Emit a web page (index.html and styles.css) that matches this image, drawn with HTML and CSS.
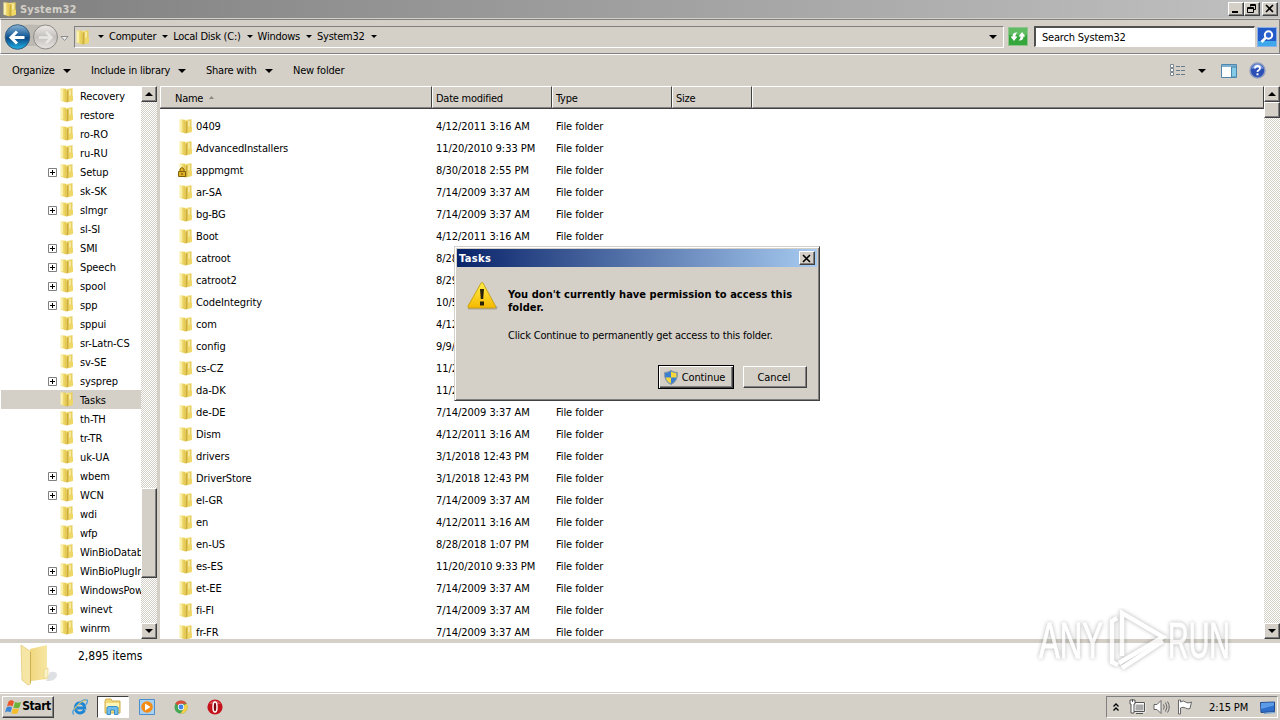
FILE: index.html
```html
<!DOCTYPE html>
<html lang="en">
<head>
  <meta charset="UTF-8">
  <title>System32</title>
  <link rel="stylesheet" href="styles.css">
</head>
<body>
  <!-- shared icons -->
  <svg class="defs" width="0" height="0">
    <defs>
      <linearGradient id="gFront" x1="0" x2="1"><stop offset="0" stop-color="#fbf0a0"/><stop offset="1" stop-color="#e3c444"/></linearGradient>
      <linearGradient id="gBack" x1="0" x2="1"><stop offset="0" stop-color="#f8e98c"/><stop offset="1" stop-color="#e6cc58"/></linearGradient>
      <linearGradient id="gBig" x1="0" x2="1"><stop offset="0" stop-color="#f0d67e"/><stop offset="1" stop-color="#f7e7a4"/></linearGradient>
      <linearGradient id="gBlue" x1="0" y1="0" x2="0" y2="1"><stop offset="0" stop-color="#8ab4d4"/><stop offset=".45" stop-color="#1d5f9c"/><stop offset=".55" stop-color="#0d4a86"/><stop offset="1" stop-color="#22b4e8"/></linearGradient>
      <linearGradient id="gGrey" x1="0" y1="0" x2="0" y2="1"><stop offset="0" stop-color="#eceae8"/><stop offset=".5" stop-color="#c4c0bc"/><stop offset="1" stop-color="#e6e4e2"/></linearGradient>
      <linearGradient id="gWarn" x1="0" y1="0" x2="0" y2="1"><stop offset="0" stop-color="#fff04a"/><stop offset="1" stop-color="#f5b800"/></linearGradient>
      <symbol id="folder" viewBox="0 0 16 16">
        <path d="M7 2 13.500 1.200v12.800l-6 1z" fill="url(#gBack)"/>
        <path d="M1.500 1.200 7 1.800 7.500 15.500 1.500 13.800z" fill="url(#gFront)"/>
        <path d="M7.500 3.500 9.500 3v12l-2 .5z" fill="#cfae38"/>
        <path d="M10 9.500l4-.7v5l-4 1.200z" fill="#efd768"/>
        <path d="M3 2.500v10.500M11 3v5.500" stroke="#fffbd0"/>
      </symbol>
      <symbol id="down" viewBox="0 0 8 4"><path d="M0 0h8L4 4z"/></symbol>
    </defs>
  </svg>

  <div class="titlebar">
    <svg class="icon16"><use href="#folder"/></svg>
    <span class="title">System32</span>
    <button class="winbtn"><svg width="10" height="9"><path d="M1 7h6v2H1z"/></svg></button>
    <button class="winbtn"><svg width="10" height="9" fill="none" stroke="#000"><path d="M3.500 2.500v-2h5v5h-2M3 1.500h6M.5 3.500h6v5h-6zM0 4.500h7"/></svg></button>
    <button class="winbtn gap"><svg width="10" height="9" fill="none" stroke="#000" stroke-width="1.600"><path d="M1 1l7 7M8 1L1 8"/></svg></button>
  </div>

  <div class="navbar">
    <svg class="nav-buttons" width="72" height="30">
      <path d="M10 5Q30 0 52 5V24H10z" fill="#b4b0aa" opacity=".7"/>
      <circle cx="17.500" cy="15" r="12.300" fill="url(#gBlue)" stroke="#3c5f7e"/>
      <path d="M24.500 15.500H11.500M17 9.500l-6 6 6 6" fill="none" stroke="#fff" stroke-width="3"/>
      <circle cx="45.500" cy="15" r="12" fill="url(#gGrey)" stroke="#8d8985"/>
      <path d="M39 15.500h12.500M46 10l5.500 5.500L46 21" fill="none" stroke="#e9e7e4" stroke-width="2.500"/>
      <path d="M61 14.500h7l-3.500 4z" fill="#eee" stroke="#8b8b8b"/>
    </svg>
    <div class="address">
      <svg class="icon16"><use href="#folder"/></svg>
      <svg class="crumb-arrow first"><use href="#down"/></svg><span>Computer</span>
      <svg class="crumb-arrow"><use href="#down"/></svg><span>Local Disk (C:)</span>
      <svg class="crumb-arrow"><use href="#down"/></svg><span>Windows</span>
      <svg class="crumb-arrow"><use href="#down"/></svg><span>System32</span>
      <svg class="crumb-arrow"><use href="#down"/></svg>
      <svg class="arrow history"><use href="#down"/></svg>
    </div>
    <svg class="refresh" width="20" height="19"><rect x=".5" y=".5" width="19" height="18" fill="#35a63c" stroke="#8fc48f"/><path d="M1 1h18v7H1z" fill="#7dcb7d" opacity=".6"/><path d="M2.500 9.500 6 14l3.500-4.500H7.500q-.2-2.500 2-4-5-.5-5 4zM17.500 9.500 14 5l-3.500 4.500h2q.2 2.500-2 4 5 .5 5-4z" fill="#fff"/></svg>
    <div class="search">Search System32</div>
    <svg class="go" width="20" height="20"><rect x=".5" y=".5" width="19" height="19" fill="#2459c8" stroke="#8aaee6"/><path d="M1 14h18v5H1z" fill="#3fa8ea"/><circle cx="11.500" cy="8" r="3.700" fill="#2f63cf" stroke="#fff" stroke-width="2"/><path d="M8.500 11l-4 4" stroke="#fff" stroke-width="2.500"/></svg>
  </div>

  <div class="toolbar">
    <span class="t1">Organize</span><svg class="arrow"><use href="#down"/></svg>
    <span class="t2">Include in library</span><svg class="arrow"><use href="#down"/></svg>
    <span class="t3">Share with</span><svg class="arrow"><use href="#down"/></svg>
    <span class="t4">New folder</span>
    <svg class="view" width="16" height="13"><g fill="#fff" stroke="#7b8790"><path d="M.5.5h3v3h-3zM.5 4.500h3v3h-3zM.5 8.500h3v3h-3z"/><path d="M6 2.500h4m1 0h4M6 6.500h4m1 0h4M6 10.500h4m1 0h4" stroke="#667b8c"/></g></svg>
    <svg class="arrow view-arrow"><use href="#down"/></svg>
    <svg class="preview" width="17" height="14"><path d="M.5.5h15v13H.5z" fill="#fff" stroke="#4e86ad"/><path d="M1 1h14v2H1z" fill="#7fb0d0"/><path d="M10.500 3v10h5V3z" fill="#83c9e8" stroke="#4e86ad"/></svg>
    <svg class="help" width="17" height="17"><circle cx="8.500" cy="8.500" r="7.500" fill="#2b4fb5" stroke="#8e9cc0" stroke-width="1.500"/><path d="M2.500 7q2-5 6-5t6 5q-6-2-12 0" fill="#7d9de0"/><path d="M6 6.500Q6 4 8.500 4T11 6.200q0 1.300-1.500 2.100-1 .5-1 1.700" fill="none" stroke="#fff" stroke-width="1.800"/><path d="M7.500 11.300h2v2h-2z" fill="#fff"/></svg>
  </div>

  <div class="main">
    <div class="tree" id="tree"></div>
    <div class="scrollbar left">
      <button><svg class="arrow up"><use href="#down"/></svg></button>
      <div class="thumb"></div>
      <button class="last"><svg class="arrow"><use href="#down"/></svg></button>
    </div>
    <div class="splitter"></div>
    <div class="list">
      <div class="header">
        <div class="col name">Name <svg width="5" height="3"><path d="M0 3h5L2.500 0z" fill="#8c8880"/></svg></div>
        <div class="col">Date modified</div>
        <div class="col">Type</div>
        <div class="col size">Size</div>
        <div class="col rest"></div>
      </div>
      <div class="rows" id="rows"></div>
    </div>
    <div class="scrollbar right">
      <button><svg class="arrow up"><use href="#down"/></svg></button>
      <div class="thumb"></div>
      <button class="last"><svg class="arrow"><use href="#down"/></svg></button>
    </div>
  </div>

  <div class="details">
    <svg width="40" height="44" viewBox="0 0 40 44">
      <path d="M26 37l4-9q7-1 7 3t-7 6z" fill="#c8ccd0" opacity=".6"/>
      <path d="M10 5 27 1V35l-16 2z" fill="url(#gBig)"/>
      <path d="M24 26l4-2v9l-4 2z" fill="#fbf3c8" stroke="#e4cb76" stroke-width=".6"/>
      <path d="M1 1l9.500 6.500V40L8 41 2 36z" fill="#f6e6a6" stroke="#dfc670" stroke-width=".7"/>
      <path d="M10.500 8v31" stroke="#cfae52"/>
    </svg>
    <span>2,895 items</span>
  </div>

  <div class="taskbar">
    <button class="start">
      <svg width="17" height="16"><path d="M3.500 2.500q3-2.500 5.500 0L7.500 7.500q-2.500-2-5.500 0z" fill="#e8582a"/><path d="M10 3q3 1.500 6 0L14.500 8.500q-3 1.500-6 0z" fill="#6db33a"/><path d="M1.500 8.500q3-2 5.500 0L5.500 13.500q-2.500-2-5.500 0z" fill="#3c86d8"/><path d="M8 9.200q3 1.500 6 0l-1.500 5q-3 1.500-6 0z" fill="#f5bd28"/></svg>
      Start
    </button>
    <svg class="app ie" width="18" height="18"><path d="M13.500 12Q12 15 8.800 15 4.300 14.500 4.300 9.700 4.800 5 9 5t4.800 5H6" fill="none" stroke="#1f86d4" stroke-width="2.800"/><path d="M3 16.500Q-.5 14.500 6 7.500T16 2Q17.500 3.500 14.500 7" fill="none" stroke="#4a9fdc" stroke-width="1.300"/><path d="M3 12q2-4 6-7t6-3.200" fill="none" stroke="#e7c34d"/></svg>
    <div class="running">
      <svg width="18" height="17"><path d="M1 3l1-2h5l1 2h8v12H1z" fill="#f2d978" stroke="#d2ae4a"/><path d="M2 5h13v4H2z" fill="#fff5b8"/><path d="M3 16.500V10q0-1.500 2-1.500h7q2 0 2 1.500v6.500h-3.500V12h-4v4.500z" fill="#70bdec" stroke="#3a8fca"/></svg>
    </div>
    <svg class="app wmp" width="16" height="16"><path d="M.5.5h15v15H.5z" fill="#a9d2f2" stroke="#4c8ecb"/><circle cx="8" cy="8" r="5.800" fill="#f38b17"/><path d="M6 4.500 11.500 8 6 11.500z" fill="#fff"/></svg>
    <svg class="app chrome" width="14" height="14" viewBox="0 0 16 16"><circle cx="8" cy="8" r="7.500" fill="#45a653"/><path d="M8 8 1.500 4.300A7.500 7.500 0 0 1 14.500 4.300H8z" fill="#dd4b3c"/><path d="M8 8 14.500 4.300A7.500 7.500 0 0 1 7.500 15.500L11.200 9.900z" fill="#f8cf46"/><circle cx="8" cy="8" r="3.600" fill="#fff"/><circle cx="8" cy="8" r="2.800" fill="#4383e8"/></svg>
    <svg class="app opera" width="16" height="16"><circle cx="8" cy="8" r="7.600" fill="#c5131c"/><path d="M2 5Q8-2 14 5z" fill="#e8777a" opacity=".6"/><ellipse cx="8" cy="8" rx="2" ry="5" fill="#7a0a10" stroke="#fff" stroke-width="1.500"/></svg>
    <div class="tray">
      <svg width="6" height="9" fill="none" stroke="#000" stroke-width="1.300"><path d="M.5 3.500 3 1l2.500 2.500M.5 7.500 3 5l2.500 2.500"/></svg>
      <svg class="net" width="17" height="16"><path d="M5.500 4.500h10v8h-10z" fill="#aaa" stroke="#fff" stroke-width="2"/><path d="M4.500 3.500h11v9h-11zM7 14.500h7" fill="none" stroke="#555"/><path d="M1 1h5v4H5v9H2V5H1z" fill="#fff" stroke="#555"/><path d="M3.500 0v3" stroke="#555"/></svg>
      <svg class="vol" width="17" height="16" fill="none" stroke="#666"><path d="M1 5.500h3l4-4v13l-4-4H1z" fill="#fff"/><path d="M10.500 5.500q1.500 2.500 0 5M12.500 3.500q3 4.500 0 9M14.500 2.500q3.500 5.500 0 11"/></svg>
      <svg class="flag" width="17" height="16"><path d="M3.500 3q3-2 5 0t6 0L13 9.500q-2 1-4.500-.5t-5 0V15h-2V1h2z" fill="#fff" stroke="#666"/></svg>
      <span>2:15 PM</span>
      <svg class="desktop" width="16" height="13"><path d="M.5 1.500 14.500 1V10.500L1 11.500z" fill="#2d6fca" stroke="#234b8c"/><path d="M1 2 14 1.500v3L1 8z" fill="#5c9be6"/><path d="M4 12.500 15 11.500" stroke="#6aa6da"/></svg>
    </div>
  </div>

  <div class="dialog">
    <div class="dialog-title">Tasks <button class="winbtn"><svg width="10" height="9" fill="none" stroke="#000" stroke-width="1.600"><path d="M1 1l7 7M8 1L1 8"/></svg></button></div>
    <div class="dialog-body">
      <svg width="32" height="30"><path d="M2 27.500h28l1-2" fill="none" stroke="#aaa69e" stroke-width="2"/><path d="M16 1.500Q17 1.500 17.500 3L29.500 25q.5 2-1 2H3q-1.500 0-1-2L14.500 3q.5-1.500 1.500-1.500z" fill="url(#gWarn)" stroke="#c9a21c"/><path d="M14 8h4l-.8 10h-2.400zM14 20.500h4v4h-4z" fill="#2a2208"/></svg>
      <div class="message">
        <h1>You don't currently have permission to access this<br>folder.</h1>
        <p>Click Continue to permanently get access to this folder.</p>
      </div>
    </div>
    <div class="dialog-buttons">
      <button class="continue"><svg width="14" height="15"><path d="M7 .5q3 2 6.500 2 .5 9-6.500 12Q0 11.500.5 2.500q3.500 0 6.500-2z" fill="#3b7fd0" stroke="#8f98a4"/><path d="M7 1.500q3 1.500 5.500 1.800V7.500H7zM7 7.500v6Q2.500 11.500 1.800 7.500z" fill="#f7d93c"/></svg><span>Continue</span></button>
      <button class="cancel"><span>Cancel</span></button>
    </div>
  </div>

  <svg class="watermark" width="204" height="70">
    <g class="mark">
      <text x="5" y="50" textLength="64" lengthAdjust="spacingAndGlyphs">ANY</text>
      <text x="134" y="50" textLength="62" lengthAdjust="spacingAndGlyphs">RUN</text>
      <path d="M83 10 78 13V54L84 57"/>
      <path d="M88 48V5L129 29 85 55"/>
      <path d="M129 33 88 60"/>
    </g>
  </svg>

  <script src="script.js"></script>
</body>
</html>
```
FILE: styles.css
```css
* {
  box-sizing: border-box;
}

body {
  margin: 0;
  width: 1280px;
  height: 720px;
  overflow: hidden;
  position: relative;
  display: flex;
  flex-direction: column;
  background: #d4d0c8;
  color: #000;
  font: 11px/13px "DejaVu Sans Condensed", "DejaVu Sans", sans-serif;
  font-stretch: condensed;
  letter-spacing: -0.1px;
  white-space: nowrap;
}

svg {
  display: block;
  flex: none;
}

button {
  font: inherit;
  letter-spacing: inherit;
  color: inherit;
  padding: 0;
  flex: none;
  display: flex;
  align-items: center;
  justify-content: center;
  background: #d4d0c8;
  border: 1px solid;
  border-color: #fff #404040 #404040 #fff;
  box-shadow: inset -1px -1px #808080;
}

.defs { position: absolute; }
.icon16 { width: 16px; height: 16px; }
.arrow { width: 8px; height: 4px; }
.arrow.up { transform: rotate(180deg); }

/* Title bar */
.titlebar {
  height: 19px;
  display: flex;
  align-items: center;
  padding: 0 2px 1px;
  background: linear-gradient(90deg, #808080, #c0c0c0);
  border-bottom: 1px solid #d4d0c8;
}

.title {
  flex: 1;
  margin: 1px 0 0 2px;
  color: #d4d0c8;
  font-weight: bold;
  letter-spacing: 0.2px;
}

.winbtn {
  width: 16px;
  height: 14px;
}

.winbtn.gap { margin-left: 2px; }

/* Address row */
.navbar {
  height: 35px;
  display: flex;
  align-items: center;
  border: 1px solid #fff;
  border-color: #808080 #808080 #808080 #fff;
  box-shadow: 0 1px #fff;
}

.nav-buttons { margin: 1px 0 0 -1px; }

.address {
  width: 930px;
  height: 22px;
  margin-left: 2px;
  display: flex;
  align-items: center;
  border: 1px solid;
  border-color: #808080 #fff #fff #808080;
  letter-spacing: -0.25px;
}

.crumb-arrow {
  width: 6px;
  height: 3px;
  margin: 0 5px 0 6px;
}

.crumb-arrow.first { margin-left: 7px; }
.history { margin-left: auto; margin-right: 6px; }
.refresh { margin-left: 4px; }

.search {
  width: 221px;
  height: 21px;
  margin-left: 6px;
  padding: 3px 6px;
  background: #fff;
  border: 2px solid;
  border-color: #505050 #fff #fff #505050;
  border-width: 2px 1px 1px 2px;
  letter-spacing: -0.2px;
}

.go { margin-left: 2px; }

/* Command bar */
.toolbar {
  height: 32px;
  padding: 1px 14px 0 12px;
  display: flex;
  align-items: center;
  letter-spacing: -0.22px;
}

.t1 { width: 51px; }
.t2 { width: 87px; margin-left: 20px; }
.t3 { width: 59px; margin-left: 20px; }
.t4 { margin-left: 20px; }
.view { margin-left: auto; }
.view-arrow { margin: 0 15px 0 12px; }
.help { margin-left: 11px; }

/* Panes */
.main {
  height: 553px;
  display: flex;
}

.tree {
  width: 141px;
  padding-left: 1px;
  overflow: hidden;
  background: #fff;
}

.node {
  height: 19px;
  display: flex;
  align-items: center;
  padding-left: 47px;
}

.node.selected { background: #d4d0c8; }
.node .icon16 { margin: 0 5px 1px 2px; }
.node span { padding-top: 1px; }

.expander {
  width: 9px;
  height: 9px;
  margin-top: 2px;
  visibility: hidden;
}

.expander.on {
  visibility: visible;
}

.scrollbar {
  width: 16px;
  display: flex;
  flex-direction: column;
  background: repeating-conic-gradient(#fff 0 25%, #d4d0c8 0 50%) 0 0 / 2px 2px;
}

.scrollbar button {
  width: 16px;
  height: 16px;
}

.scrollbar .last { margin-top: auto; }

.thumb {
  background: #d4d0c8;
  border: 1px solid;
  border-color: #fff #404040 #404040 #fff;
  box-shadow: inset -1px -1px #808080;
}

.left .thumb { height: 90px; margin-top: 386px; }
.right .thumb { height: 16px; }

.splitter { width: 3px; }

.list {
  flex: 1;
  min-width: 0;
  overflow: hidden;
  background: #fff;
}

.header {
  height: 23px;
  display: flex;
  background: #d4d0c8;
  border-bottom: 1px solid #404040;
}

.col {
  width: 120px;
  padding: 5px 0 0 3px;
  border: 1px solid;
  border-color: #fff #404040 #808080 #fff;
  letter-spacing: -0.25px;
}

.col.name {
  width: 272px;
  padding-left: 14px;
  display: flex;
  gap: 6px;
}

.col.name svg { margin-top: 4px; }
.col.size { width: 80px; }
.col.rest { flex: 1; }

.rows { padding-top: 6px; }

.row {
  height: 22px;
  display: grid;
  grid-template-columns: 18px 18px 240px 120px 1fr;
  align-items: center;
}

.row .icon16 { grid-column: 2; margin-bottom: 1px; }
.row .date { letter-spacing: -0.05px; }

/* Details pane */
.details {
  height: 53px;
  padding: 1px 0 0 20px;
  display: flex;
  background: #fff;
  border-top: 4px solid #d4d0c8;
}

.details span {
  margin: 6px 0 0 18px;
  font-size: 12px;
  letter-spacing: 0;
}

/* Task bar */
.taskbar {
  height: 28px;
  padding: 2px;
  display: flex;
  align-items: center;
  box-shadow: inset 0 1px #d4d0c8, inset 0 2px #fff;
}

.start {
  width: 52px;
  height: 22px;
  margin-top: 1px;
  font-size: 12px;
  font-weight: bold;
  letter-spacing: -0.45px;
}

.app { margin-top: 2px; }
.ie { margin-left: 17px; }

.running {
  width: 32px;
  height: 22px;
  margin: 1px 0 0 8px;
  display: flex;
  align-items: center;
  justify-content: center;
  background: #fff;
  border: 1px solid;
  border-color: #404040 #fff #fff #404040;
}

.wmp { margin-left: 10px; }
.chrome { margin-left: 19px; }
.opera { margin-left: 19px; }

.tray {
  width: 172px;
  height: 22px;
  margin: 2px 0 0 auto;
  padding-left: 6px;
  display: flex;
  align-items: center;
  border: 1px solid;
  border-color: #808080 #fff #fff #808080;
}

.net { margin-left: 10px; }
.vol { margin-left: 7px; }
.flag { margin-left: 7px; }
.tray span { margin-left: 15px; width: 40px; }
.desktop { margin-left: 11px; }

/* Permission dialog */
.dialog {
  position: absolute;
  left: 454px;
  top: 246px;
  width: 366px;
  height: 155px;
  padding: 2px;
  background: #d4d0c8;
  border: 1px solid;
  border-color: #d4d0c8 #404040 #404040 #d4d0c8;
  box-shadow: inset 1px 1px #fff, inset -1px -1px #808080;
}

.dialog-title {
  height: 18px;
  padding: 0 2px;
  display: flex;
  align-items: center;
  justify-content: space-between;
  background: linear-gradient(90deg, #0a246a, #a6caf0);
  color: #fff;
  font-weight: bold;
  letter-spacing: 0.35px;
}

.dialog-title .winbtn { color: #000; }

.dialog-body {
  display: flex;
  padding: 14px 0 0 9px;
}

.message { margin: 7px 0 0 10px; }

.message h1 {
  margin: 0;
  font-size: 11px;
  line-height: 13px;
  letter-spacing: 0.05px;
}

.message p {
  margin: 15px 0 0;
  letter-spacing: -0.18px;
}

.dialog-buttons {
  margin-top: 23px;
  padding-right: 10px;
  display: flex;
  justify-content: flex-end;
  align-items: center;
  gap: 9px;
}

.continue {
  width: 76px;
  height: 24px;
  gap: 4px;
  padding-right: 3px;
  border-color: #000;
  box-shadow: inset 1px 1px #fff, inset -1px -1px #404040, inset -2px -2px #808080;
}

.cancel {
  width: 64px;
  height: 22px;
  padding-right: 2px;
}

/* Overlay logo */
.watermark {
  position: absolute;
  left: 1034px;
  top: 608px;
  font: 50px/1 "Liberation Sans", sans-serif;
  letter-spacing: 0;
}

.mark {
  fill: #fff;
  filter: drop-shadow(0 0 2px rgba(0, 0, 0, 0.4));
  opacity: 0.75;
}

.mark text {
  stroke: #fff;
  stroke-width: 1;
}

.mark path {
  fill: none;
  stroke: #fff;
  stroke-width: 4.5;
}
```
FILE: script.js
```js
// a leading "+" marks a collapsed node
const nodes = ['Recovery', 'restore', 'ro-RO', 'ru-RU', '+Setup', 'sk-SK', '+slmgr', 'sl-SI', '+SMI',
  '+Speech', '+spool', '+spp', 'sppui', 'sr-Latn-CS', 'sv-SE', '+sysprep', 'Tasks', 'th-TH', 'tr-TR',
  'uk-UA', '+wbem', '+WCN', 'wdi', 'wfp', 'WinBioDatabase', '+WinBioPlugIns', '+WindowsPowerShell',
  '+winevt', '+winrm', ''];

const files = [
  ['0409', '4/12/2011 3:16 AM'],
  ['AdvancedInstallers', '11/20/2010 9:33 PM'],
  ['appmgmt', '8/30/2018 2:55 PM'],
  ['ar-SA', '7/14/2009 3:37 AM'],
  ['bg-BG', '7/14/2009 3:37 AM'],
  ['Boot', '4/12/2011 3:16 AM'],
  ['catroot', '8/28/2018 1:07 PM'],
  ['catroot2', '8/29/2018 1:07 PM'],
  ['CodeIntegrity', '10/5/2017 3:16 AM'],
  ['com', '4/12/2011 3:16 AM'],
  ['config', '9/9/2018 2:13 PM'],
  ['cs-CZ', '11/20/2010 9:33 PM'],
  ['da-DK', '11/20/2010 9:33 PM'],
  ['de-DE', '7/14/2009 3:37 AM'],
  ['Dism', '4/12/2011 3:16 AM'],
  ['drivers', '3/1/2018 12:43 PM'],
  ['DriverStore', '3/1/2018 12:43 PM'],
  ['el-GR', '7/14/2009 3:37 AM'],
  ['en', '4/12/2011 3:16 AM'],
  ['en-US', '8/28/2018 1:07 PM'],
  ['es-ES', '11/20/2010 9:33 PM'],
  ['et-EE', '7/14/2009 3:37 AM'],
  ['fi-FI', '7/14/2009 3:37 AM'],
  ['fr-FR', '7/14/2009 3:37 AM']
];

const plus = '<path d="M.5.5h8v8h-8z" fill="#fff" stroke="#808080"/><path d="M2 4.500h5M4.500 2v5" stroke="#000"/>';
const lock = '<path d="M.5 9.500h7v5h-7zM2 9V7q2-3 4 0v2" fill="#e0b028" stroke="#80620c"/><path d="M4 11v2" stroke="#5c4300"/>';

document.getElementById('tree').innerHTML = nodes.map(n => {
  const collapsed = n.startsWith('+');
  const name = n.replace('+', '');
  return `<div class="node${name === 'Tasks' ? ' selected' : ''}">
    <svg class="expander${collapsed ? ' on' : ''}">${plus}</svg>
    <svg class="icon16"><use href="#folder"/></svg><span>${name}</span></div>`;
}).join('');

document.getElementById('rows').innerHTML = files.map(([name, date]) =>
  `<div class="row"><svg class="icon16"><use href="#folder"/>${name === 'appmgmt' ? lock : ''}</svg>
    <span>${name}</span><span class="date">${date}</span><span>File folder</span></div>`
).join('');
```
